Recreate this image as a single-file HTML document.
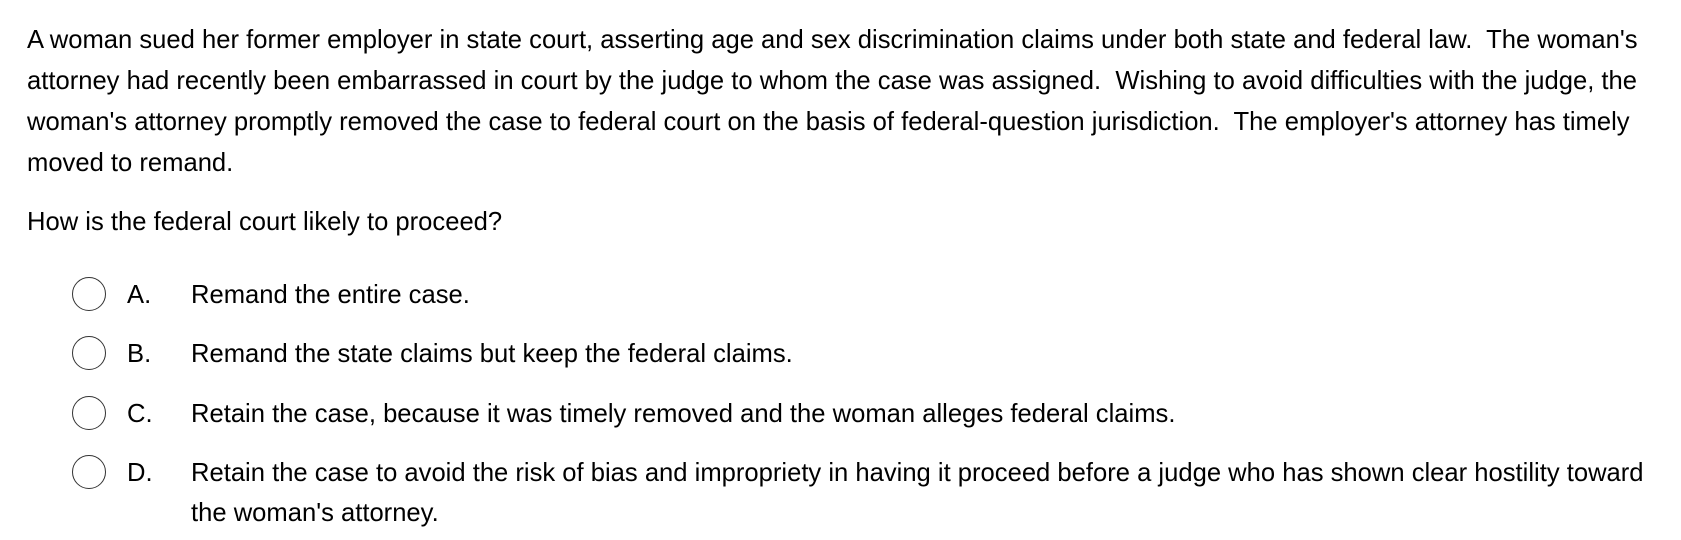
<!DOCTYPE html>
<html><head><meta charset="utf-8"><style>
html,body{margin:0;padding:0;background:#fff;width:1681px;height:540px;overflow:hidden}
body{font-family:"Liberation Sans",Arial,sans-serif;font-size:25.6px;color:#000}
.p{position:absolute;left:27px;top:20px;width:1640px;line-height:41px}
.q{position:absolute;left:27px;top:202px;line-height:41px}
.o{position:absolute;left:0;width:1681px;line-height:40px}
.c{position:absolute;left:72px;width:32px;height:32px;border:1.3px solid #333;border-radius:50%}
.l{position:absolute;left:127px}
.t{position:absolute;left:191px;width:1472px}
</style></head><body>
<div class="p">A woman sued her former employer in state court, asserting age and sex discrimination claims under both state and federal law.&nbsp; The woman's attorney had recently been embarrassed in court by the judge to whom the case was assigned.&nbsp; Wishing to avoid difficulties with the judge, the woman's attorney promptly removed the case to federal court on the basis of federal-question jurisdiction.&nbsp; The employer's attorney has timely moved to remand.</div>
<div class="q">How is the federal court likely to proceed?</div>
<div class="o" style="top:275px"><div class="c" style="top:2px"></div><span class="l">A.</span><span class="t">Remand the entire case.</span></div>
<div class="o" style="top:334px"><div class="c" style="top:2px"></div><span class="l">B.</span><span class="t">Remand the state claims but keep the federal claims.</span></div>
<div class="o" style="top:394px"><div class="c" style="top:2px"></div><span class="l">C.</span><span class="t">Retain the case, because it was timely removed and the woman alleges federal claims.</span></div>
<div class="o" style="top:453px"><div class="c" style="top:2px"></div><span class="l">D.</span><span class="t">Retain the case to avoid the risk of bias and impropriety in having it proceed before a judge who has shown clear hostility toward the woman's attorney.</span></div>
</body></html>
